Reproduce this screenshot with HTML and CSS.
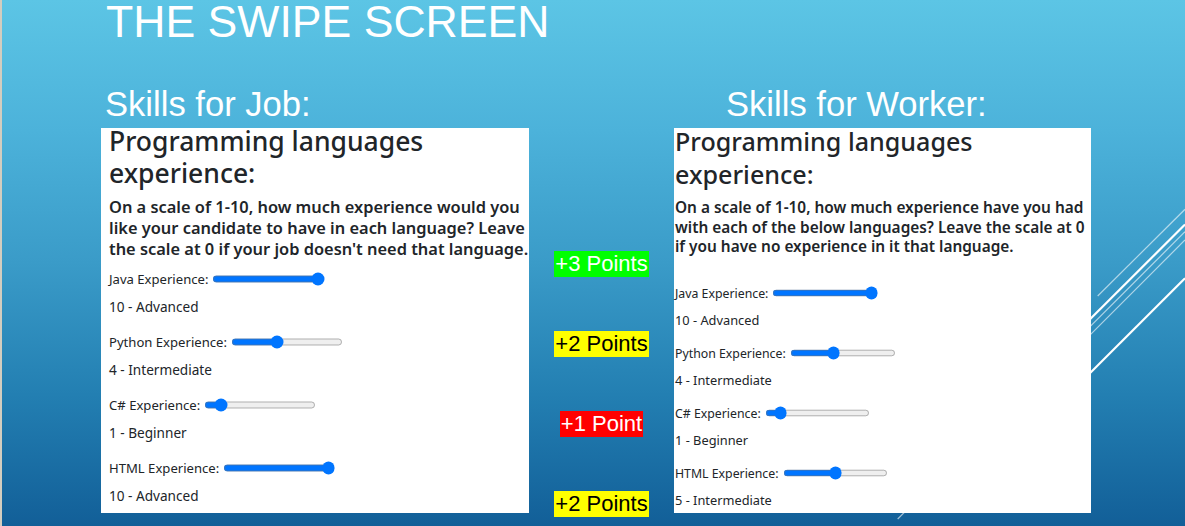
FILE: index.html
```html
<!DOCTYPE html>
<html lang="en">
<head>
<meta charset="utf-8">
<title>The Swipe Screen</title>
<link rel="stylesheet" href="styles.css">
</head>
<body>
<div class="slide">
  <svg class="decor" width="1185" height="526" viewBox="0 0 1185 526" aria-hidden="true">
    <line class="thin" x1="1097.7" y1="296" x2="1185" y2="209.3"/>
    <line class="thick" x1="1000" y1="409" x2="1185" y2="224.5"/>
    <line class="thin" x1="897.7" y1="519" x2="1185" y2="231.7"/>
    <line class="thin" x1="1000" y1="425" x2="1185" y2="240"/>
    <line class="thick" x1="1000" y1="463" x2="1185" y2="278.3"/>
  </svg>

  <h1 class="title">THE SWIPE SCREEN</h1>

  <div class="columns">
    <section class="col col-job">
      <h2 class="col-heading">Skills for Job:</h2>
      <div class="card card-job">
        <h3 class="card-title">Programming languages experience:</h3>
        <p class="card-lead">On a scale of 1-10, how much experience would you<br>like your candidate to have in each language? Leave<br>the scale at 0 if your job doesn't need that language.</p>
        <div class="skill">
          <label class="skill-row">Java Experience: <input type="range" min="0" max="10" value="10"></label>
          <p class="level">10 - Advanced</p>
        </div>
        <div class="skill">
          <label class="skill-row">Python Experience: <input type="range" min="0" max="10" value="4"></label>
          <p class="level">4 - Intermediate</p>
        </div>
        <div class="skill">
          <label class="skill-row">C# Experience: <input type="range" min="0" max="10" value="1"></label>
          <p class="level">1 - Beginner</p>
        </div>
        <div class="skill">
          <label class="skill-row">HTML Experience: <input type="range" min="0" max="10" value="10"></label>
          <p class="level">10 - Advanced</p>
        </div>
      </div>
    </section>

    <div class="points">
      <span class="badge badge-green">+3 Points</span>
      <span class="badge badge-yellow">+2 Points</span>
      <span class="badge badge-red">+1 Point</span>
      <span class="badge badge-yellow">+2 Points</span>
    </div>

    <section class="col col-worker">
      <h2 class="col-heading">Skills for Worker:</h2>
      <div class="card card-worker">
        <h3 class="card-title">Programming languages experience:</h3>
        <p class="card-lead">On a scale of 1-10, how much experience have you had<br>with each of the below languages? Leave the scale at 0<br>if you have no experience in it that language.</p>
        <div class="skill">
          <label class="skill-row">Java Experience: <input type="range" min="0" max="10" value="10"></label>
          <p class="level">10 - Advanced</p>
        </div>
        <div class="skill">
          <label class="skill-row">Python Experience: <input type="range" min="0" max="10" value="4"></label>
          <p class="level">4 - Intermediate</p>
        </div>
        <div class="skill">
          <label class="skill-row">C# Experience: <input type="range" min="0" max="10" value="1"></label>
          <p class="level">1 - Beginner</p>
        </div>
        <div class="skill">
          <label class="skill-row">HTML Experience: <input type="range" min="0" max="10" value="5"></label>
          <p class="level">5 - Intermediate</p>
        </div>
      </div>
    </section>
  </div>
</div>
</body>
</html>
```
FILE: styles.css
```css
html, body {
  margin: 0;
  padding: 0;
}

body {
  width: 1185px;
  height: 526px;
  overflow: hidden;
  font-family: "Liberation Sans", Arial, sans-serif;
}

.slide {
  position: relative;
  width: 1185px;
  height: 526px;
  box-sizing: border-box;
  border-left: 2px solid #d3cdbf;
  background: linear-gradient(to bottom, #5cc5e5 0%, #4cb2da 25%, #3a9bc8 50%, #237fb2 75%, #125f98 100%);
  overflow: hidden;
}

.decor {
  position: absolute;
  left: -2px;
  top: 0;
  pointer-events: none;
}

.decor line {
  stroke: #ffffff;
}

.decor .thin {
  stroke-width: 1.2;
  stroke-opacity: 0.6;
}

.decor .thick {
  stroke-width: 2.2;
}

.title {
  position: relative;
  margin: 0 0 0 104px;
  font-size: 44.6px;
  line-height: 44px;
  font-weight: normal;
  color: #ffffff;
}

.columns {
  position: relative;
  display: flex;
  margin: 43px 0 0 99px;
}

.col-job {
  width: 428px;
}

.col-worker {
  width: 417px;
}

.col-heading {
  margin: 0 0 7px 4px;
  font-size: 34.6px;
  line-height: 34px;
  font-weight: normal;
  color: #ffffff;
}

.col-worker .col-heading {
  margin-left: 52px;
}

.card {
  display: flow-root;
  height: 385px;
  box-sizing: border-box;
  background: #ffffff;
  color: #212529;
  font-family: "Noto Sans", "Open Sans", sans-serif;
}

.card-title {
  margin: 0;
  font-weight: 500;
}

.card-lead {
  margin: 0;
  font-weight: 600;
  white-space: nowrap;
}

.skill-row {
  display: flex;
  align-items: center;
  gap: 4px;
  white-space: nowrap;
}

.skill-row input {
  margin: 0;
}

.level {
  margin: 0;
}

/* Job card */
.card-job {
  padding-left: 8px;
}

.card-job .card-title {
  margin-top: -3px;
  font-size: 26.5px;
  line-height: 32px;
}

.card-job .card-lead {
  margin-top: 7px;
  font-size: 16.4px;
  line-height: 21px;
}

.card-job .skill {
  margin-top: 15px;
}

.card-job .skill:first-of-type {
  margin-top: 10px;
}

.card-job .skill-row {
  height: 20px;
  font-size: 13.1px;
}

.card-job .skill-row input {
  zoom: 0.87;
}

.card-job .level {
  margin-top: 8px;
  font-size: 13.6px;
  line-height: 20px;
}

/* Worker card */
.card-worker {
  padding-left: 1px;
}

.card-worker .card-title {
  margin-top: -3px;
  font-size: 25.1px;
  line-height: 33px;
}

.card-worker .card-lead {
  margin-top: 7px;
  font-size: 15.4px;
  line-height: 19.5px;
}

.card-worker .skill {
  margin-top: 14px;
}

.card-worker .skill:first-of-type {
  margin-top: 27px;
}

.card-worker .skill-row {
  height: 19px;
  font-size: 12.3px;
}

.card-worker .skill-row input {
  zoom: 0.82;
}

.card-worker .level {
  margin-top: 8px;
  font-size: 12.8px;
  line-height: 19px;
}

/* Points */
.points {
  width: 145px;
  display: flex;
  flex-direction: column;
  align-items: center;
  gap: 54px;
  padding-top: 164px;
}

.badge {
  display: block;
  padding: 0 1px;
  font-size: 22px;
  line-height: 26px;
  white-space: nowrap;
}

.badge-green {
  background: #00ff00;
  color: #ffffff;
}

.badge-yellow {
  background: #ffff00;
  color: #000000;
}

.badge-red {
  background: #ff0000;
  color: #ffffff;
}
```
